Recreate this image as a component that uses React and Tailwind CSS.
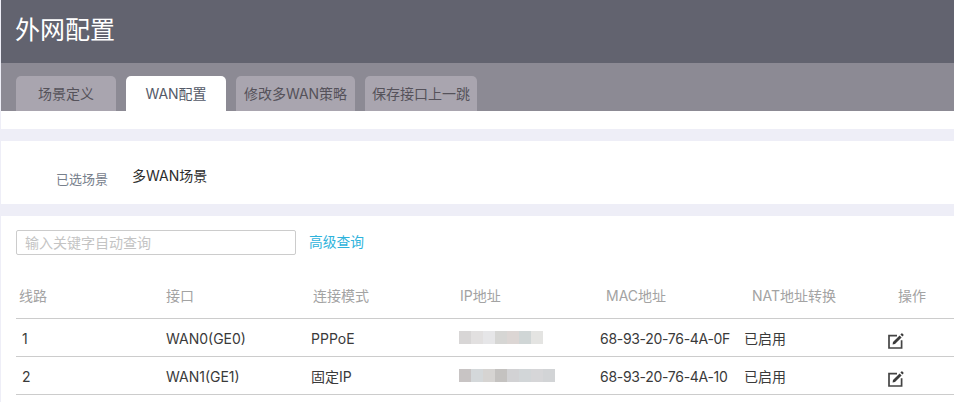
const tabs = [
  { label: "场景定义", width: "w-[100px]" },
  { label: "WAN配置", width: "w-[100px]", active: true },
  { label: "修改多WAN策略", width: "w-[119px]" },
  { label: "保存接口上一跳", width: "w-[112px]" },
];

const columns = ["线路", "接口", "连接模式", "IP地址", "MAC地址", "NAT地址转换", "操作"];

const rows = [
  {
    line: "1",
    port: "WAN0(GE0)",
    mode: "PPPoE",
    mac: "68-93-20-76-4A-0F",
    ip: ["#d8d6d6", "#e2e0e0", "#e6e6e8", "#d6d6d4", "#dcd6d4", "#d0d6d6", "#e4e4e2"],
  },
  {
    line: "2",
    port: "WAN1(GE1)",
    mode: "固定IP",
    mac: "68-93-20-76-4A-10",
    ip: ["#c8c4c4", "#d4d8da", "#d6d4d2", "#c4c2c0", "#d2d2d4", "#d2d6d8", "#d6d6d8", "#d2d4d6"],
  },
];

const EditIcon = () => (
  <svg width="16" height="16" viewBox="0 0 16 16" className="block mt-[4px]">
    <path d="M9 2.6H1v12.4h12.6V7.2" fill="none" stroke="#444444" strokeWidth="1.7" />
    <path d="M5 9 11.6 2.4l2 2L7 11l-2.4.5z" fill="#3c3c3c" />
    <path d="M12.4 1.6 13.4.6a.7.7 0 0 1 1 0l1 1a.7.7 0 0 1 0 1l-1 1z" fill="#3c3c3c" />
  </svg>
);

const App = () => {
  return (
    <div className="w-[954px] h-[402px] overflow-hidden bg-white font-['Inter','Noto_Sans_CJK_SC',sans-serif] border-l border-[#eeeef7]">
      <div className="h-[63px] bg-[#62636f] pl-[14px] pb-[3px] flex items-center">
        <h1 className="text-[25px] leading-none text-white">外网配置</h1>
      </div>

      {/* Tabs */}
      <div className="h-[48px] bg-[#8c8a94] pl-[15px] flex items-end gap-[10px]">
        {tabs.map((t) => (
          <div
            key={t.label}
            className={`${t.width} h-[35px] rounded-t-[5px] flex items-center justify-center text-[14px] whitespace-nowrap ${
              t.active ? "bg-white text-[#555a68]" : "bg-[#a9a5af] text-[#55525a]"
            }`}
          >
            {t.label}
          </div>
        ))}
      </div>

      <div className="h-[18px]" />
      <div className="h-[12px] bg-[#eeeef7]" />

      {/* Selected scene */}
      <div className="h-[63px] flex pl-[55px] pt-[29px] text-[13px] leading-[18px]">
        <span className="w-[76px] text-[#77808c]">已选场景</span>
        <span className="text-[14px] -mt-[3px] text-[#2c2c2c]">多WAN场景</span>
      </div>
      <div className="h-[12px] bg-[#eeeef7]" />

      {/* Search */}
      <div className="pl-[15px] pt-[14px] flex items-center gap-[13px]">
        <div className="w-[280px] h-[25px] border border-[#cccccc] rounded-[2px] pl-[8px] flex items-center text-[14px] text-[#c4c4c4]">
          输入关键字自动查询
        </div>
        <span className="text-[13.75px] text-[#2eb3dc]">高级查询</span>
      </div>

      {/* Table */}
      <div className="ml-[15px] mt-[23px]">
        <div className="h-[41px] pl-[3px] pb-[5px] grid grid-cols-[147px_147px_147px_146px_146px_146px_56px] items-center text-[14px] text-[#a3a3a3] border-b border-[#cccccc] whitespace-nowrap">
          {columns.map((c) => (
            <span key={c}>{c}</span>
          ))}
        </div>
        {rows.map((r) => (
          <div
            key={r.line}
            className="h-[38px] pl-[6px] pt-[2px] grid grid-cols-[144px_145px_148px_141px_144px_144px_40px] items-center text-[14px] text-[#3a3a3a] border-b border-[#cccccc] whitespace-nowrap"
          >
            <span>{r.line}</span>
            <span>{r.port}</span>
            <span>{r.mode}</span>
            <div className="flex h-[13px] -mt-[2px]">
              {r.ip.map((color, i) => (
                <span key={i} className="w-[12px] h-full" style={{ backgroundColor: color }} />
              ))}
            </div>
            <span className="tracking-[-0.3px]">{r.mac}</span>
            <span>已启用</span>
            <EditIcon />
          </div>
        ))}
      </div>
    </div>
  );
};

export default App;
